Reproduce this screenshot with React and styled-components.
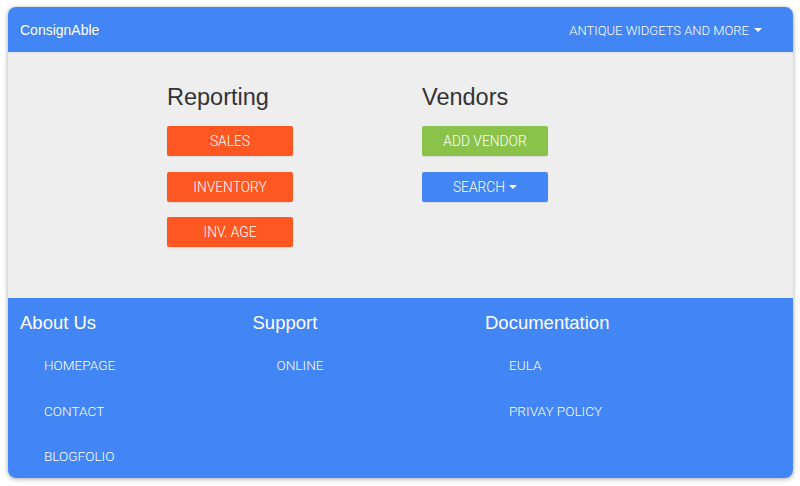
import React from "react";
import styled, { createGlobalStyle } from "styled-components";

const Global = createGlobalStyle`
  html, body { margin: 0; padding: 0; background: #ffffff; }
  body { font-family: "Liberation Sans", Arial, Helvetica, sans-serif; }
  * { box-sizing: border-box; }
`;

const lightFont = `Roboto, "Liberation Sans", Arial, sans-serif`;

const Page = styled.div`
  padding: 7px 7px 8px 8px;
`;

const Frame = styled.div`
  width: 785px;
  height: 471px;
  border-radius: 8px;
  overflow: hidden;
  box-shadow: 0 1px 5px rgba(0, 0, 0, 0.35);
  display: flex;
  flex-direction: column;
  background: #eeeeee;
`;

const NavBar = styled.nav`
  height: 46px;
  flex: none;
  background: #4285f4;
  border-bottom: 1px solid #dfe5ee;
  display: flex;
  align-items: center;
  justify-content: space-between;
  padding: 0 31px 0 12px;
  color: #ffffff;
`;

const Brand = styled.div`
  font-size: 14px;
  margin-top: 1px;
`;

const NavMenu = styled.div`
  font-family: ${lightFont};
  font-size: 13px;
  font-weight: 300;
  display: flex;
  align-items: center;
  gap: 5px;
  margin-top: 1px;
`;

const Caret = styled.span`
  display: inline-block;
  width: 0;
  height: 0;
  border-top: 4px solid #ffffff;
  border-left: 4px solid transparent;
  border-right: 4px solid transparent;
`;

const Main = styled.main`
  height: 245px;
  flex: none;
  display: flex;
  padding: 31px 0 0 159px;
`;

const Column = styled.section`
  width: 255px;
  display: flex;
  flex-direction: column;
  align-items: flex-start;
`;

const Heading = styled.h2`
  margin: 0 0 16px 0;
  font-size: 23.5px;
  font-weight: 400;
  line-height: 26px;
  color: #333333;
`;

const Button = styled.button`
  width: 126px;
  height: 30px;
  margin: 0 0 15.5px 0;
  border: none;
  border-radius: 2px;
  background: ${(p) => p.$bg};
  color: #ffffff;
  font-family: ${lightFont};
  font-size: 13.8px;
  font-weight: 300;
  line-height: 30px;
  text-transform: uppercase;
  padding: 0;
  display: flex;
  align-items: center;
  justify-content: center;
  gap: 4px;
  box-shadow: 0 1px 1px rgba(0, 0, 0, 0.08);
`;

const Footer = styled.footer`
  flex: 1;
  background: #4285f4;
  color: #ffffff;
  display: grid;
  grid-template-columns: 232.5px 232.5px 232.5px;
  padding: 14px 0 0 12px;
`;

const FootCol = styled.div`
  display: flex;
  flex-direction: column;
`;

const FootHeading = styled.h3`
  margin: 0 0 9px 0;
  font-size: 18.5px;
  font-weight: 400;
  line-height: 22px;
`;

const FootLink = styled.a`
  display: block;
  height: 45.5px;
  line-height: 45.5px;
  padding-left: 24px;
  font-family: ${lightFont};
  font-size: 13.6px;
  font-weight: 300;
  color: #ffffff;
  text-decoration: none;
  text-transform: uppercase;
`;

const footer = [
  { title: "About Us", links: ["Homepage", "Contact", "Blogfolio"] },
  { title: "Support", links: ["Online"] },
  { title: "Documentation", links: ["EULA", "Privay Policy"] },
];

export default function App() {
  return (
    <>
      <Global />
      <Page>
        <Frame>
          <NavBar>
            <Brand>ConsignAble</Brand>
            <NavMenu>
              ANTIQUE WIDGETS AND MORE <Caret />
            </NavMenu>
          </NavBar>
          <Main>
            <Column>
              <Heading>Reporting</Heading>
              <Button $bg="#ff5722">Sales</Button>
              <Button $bg="#ff5722">Inventory</Button>
              <Button $bg="#ff5722">Inv. Age</Button>
            </Column>
            <Column>
              <Heading>Vendors</Heading>
              <Button $bg="#8bc34a">Add Vendor</Button>
              <Button $bg="#4285f4">
                Search <Caret />
              </Button>
            </Column>
          </Main>
          <Footer>
            {footer.map((col) => (
              <FootCol key={col.title}>
                <FootHeading>{col.title}</FootHeading>
                {col.links.map((l) => (
                  <FootLink key={l} href="#">
                    {l}
                  </FootLink>
                ))}
              </FootCol>
            ))}
          </Footer>
        </Frame>
      </Page>
    </>
  );
}
